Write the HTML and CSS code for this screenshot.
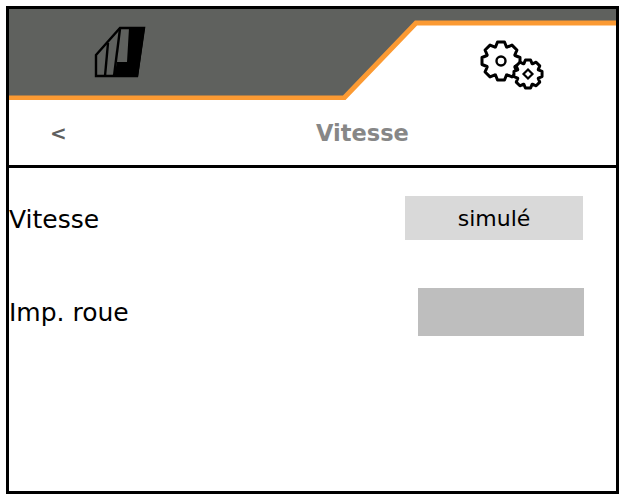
FILE: index.html
```html
<!DOCTYPE html>
<html lang="fr">
<head>
<meta charset="utf-8">
<title>Vitesse</title>
<link rel="stylesheet" href="styles.css">
</head>
<body>
<main class="frame">
  <header class="tabs">
    <svg class="tabs-bg" viewBox="0 0 607 91" width="607" height="91" aria-hidden="true">
      <polygon points="0,0 607,0 607,14 405,14 333,89 0,89" fill="#5f615e"/>
      <polyline points="0,89 335,89 407,14 607,14" fill="none" stroke="#fb9a33" stroke-width="5"/>
    </svg>
    <div class="tab tab-left">
      <svg class="icon-field" viewBox="0 0 54 52" width="54" height="52" aria-hidden="true">
        <polygon points="3,29 27,2 51,2 44,50 3,50" fill="none" stroke="#000" stroke-width="2.4"/>
        <polygon points="36,2 52,1 45,51 21,51 24,36 34,36" fill="#000"/>
        <line x1="27" y1="3" x2="21" y2="50" stroke="#000" stroke-width="2.4"/>
        <line x1="15" y1="17" x2="12" y2="50" stroke="#000" stroke-width="2.4"/>
      </svg>
    </div>
    <div class="tab tab-right">
      <svg class="icon-gears" viewBox="0 0 76 54" width="76" height="54" aria-hidden="true">
        <defs>
          <polygon id="gear" points="-5.5,-14 -3.5,-19 3.5,-19 5.5,-14 6.01,-13.79 10.96,-15.91 15.91,-10.96 13.79,-6.01 14,-5.5 19,-3.5 19,3.5 14,5.5 13.79,6.01 15.91,10.96 10.96,15.91 6.01,13.79 5.5,14 3.5,19 -3.5,19 -5.5,14 -6.01,13.79 -10.96,15.91 -15.91,10.96 -13.79,6.01 -14,5.5 -19,3.5 -19,-3.5 -14,-5.5 -13.79,-6.01 -15.91,-10.96 -10.96,-15.91 -6.01,-13.79"/>
        </defs>
        <use href="#gear" transform="translate(24,22)" fill="#fff" stroke="#000" stroke-width="3" stroke-linejoin="round"/>
        <circle cx="24" cy="22" r="4.5" fill="#fff" stroke="#000" stroke-width="2.4"/>
        <use href="#gear" transform="translate(51,35) scale(.74)" fill="#fff" stroke="#000" stroke-width="4" stroke-linejoin="round"/>
        <polygon points="51,30.5 55.5,35 51,39.5 46.5,35" fill="#fff" stroke="#000" stroke-width="2.2"/>
      </svg>
    </div>
  </header>
  <div class="titlebar">
    <span class="back">&lt;</span>
    <h1 class="title">Vitesse</h1>
  </div>
  <section class="content">
    <div class="row">
      <span class="label label-low">Vitesse</span>
      <span class="value value-text">simulé</span>
    </div>
    <div class="row">
      <span class="label">Imp. roue</span>
      <span class="value value-empty"></span>
    </div>
  </section>
</main>
</body>
</html>
```
FILE: styles.css
```css
* { box-sizing: border-box; }
html, body { margin: 0; padding: 0; background: #fff; }
body { font-family: "DejaVu Sans", Verdana, sans-serif; color: #000; }

.frame {
  width: 613px;
  height: 488px;
  margin: 6px 0 0 6px;
  border: 3px solid #000;
  display: flex;
  flex-direction: column;
}

.tabs {
  position: relative;
  height: 91px;
  display: flex;
  flex: none;
}
.tabs-bg { position: absolute; left: 0; top: 0; }
.tab { position: relative; display: flex; }
.tab-left { width: 406px; padding: 17px 0 0 84px; }
.tab-right { flex: 1; padding: 30px 0 0 62px; }
.icon-field, .icon-gears { display: block; }

.titlebar {
  position: relative;
  height: 68px;
  flex: none;
  border-bottom: 3px solid #000;
  display: flex;
  align-items: center;
  color: #878787;
  font-weight: bold;
  font-size: 22.5px;
}
.back { width: 100px; padding-left: 41px; color: #5f5f5f; font-size: 20px; }
.title { margin: 0; font: inherit; width: 508px; text-align: center; }

.content {
  flex: 1;
  padding-top: 28px;
  display: flex;
  flex-direction: column;
  gap: 48px;
}
.row {
  display: flex;
  justify-content: space-between;
  align-items: center;
  font-size: 25px;
}
.label-low { padding-top: 3px; }
.value { display: block; }
.value-text {
  width: 178px;
  height: 44px;
  margin-right: 33px;
  background: #d9d9d9;
  font-size: 22px;
  line-height: 46px;
  text-align: center;
}
.value-empty {
  width: 166px;
  height: 48px;
  margin-right: 32px;
  background: #bebebe;
}
```
